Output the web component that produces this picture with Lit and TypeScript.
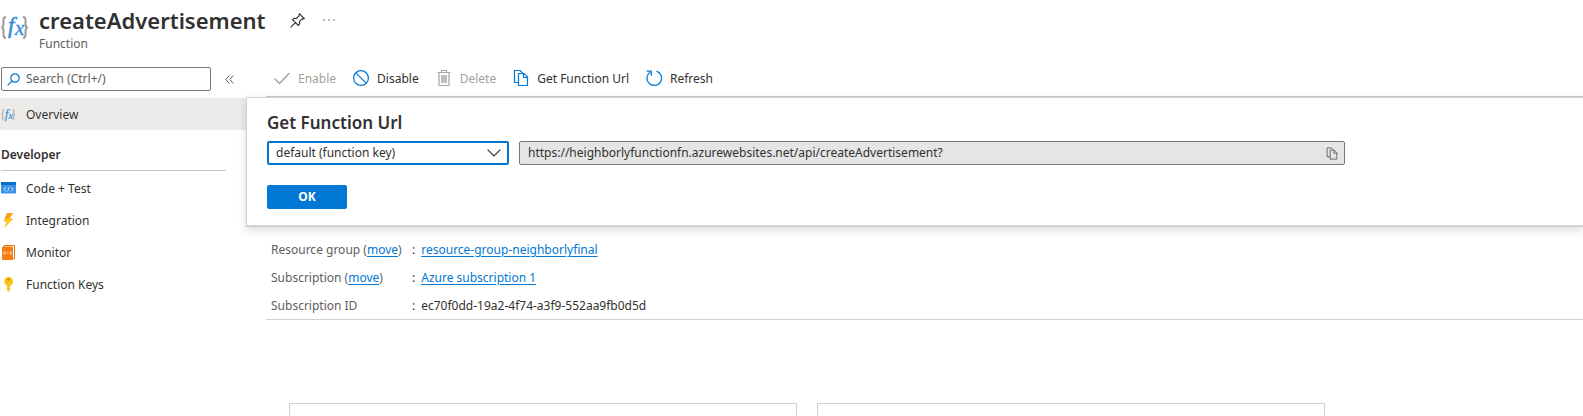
import { LitElement, html, svg, css } from "lit";
import { customElement, state } from "lit/decorators.js";

const copyPath = svg`
  <path d="M5.5 12.5h-4v-12h5.5l2.5 2.5"/>
  <path d="M5.500 3.500h5.500l3.500 3.500v8.500h-9z"/>
  <path d="M10.500 3.500v4h4"/>`;

const icons = {
  fx: svg`
    <g fill="none" stroke="#9c9c9c" stroke-width="2">
      <path d="M6 4C3.800 4 3.500 5 3.500 7v4c0 2.500-.8 3.500-2.300 3.500 1.500 0 2.300 1 2.300 3.500V22c0 2 .3 3 2.500 3"/>
      <path d="M23 4c2.200 0 2.500 1 2.500 3v4c0 2.500.8 3.500 2.300 3.500-1.500 0-2.300 1-2.300 3.500V22c0 2-.3 3-2.500 3"/>
    </g>
    <text x="8" y="20" font-family="Liberation Serif, serif" font-style="italic" font-size="23" fill="#2f8be0" stroke="#2f8be0" stroke-width="0.500">f</text>
    <text x="15" y="22" font-family="Liberation Serif, serif" font-style="italic" font-size="21" fill="#2f8be0" stroke="#2f8be0" stroke-width="0.300">x</text>`,
  check: svg`<path d="M.5 8.500l5 5L15.500 3" fill="none" stroke="#a19f9d" stroke-width="1.300"/>`,
  block: svg`<g fill="none" stroke="#0078d4" stroke-width="1.200"><circle cx="8" cy="8" r="7.400"/><path d="M2.800 2.800l10.400 10.400"/></g>`,
  trash: svg`<g fill="none" stroke="#a8a6a4" stroke-width="1.200"><path d="M1.500 2.500h13M5.500 2.500v-2h5v2M3 2.500v13h10v-13"/></g><path d="M5 5h6v8H5z" fill="#c0bebc"/>`,
  copyBlue: svg`<g fill="none" stroke="#0078d4" stroke-width="1.200">${copyPath}</g>`,
  refresh: svg`<g fill="none" stroke="#0078d4" stroke-width="1.300"><path d="M10.500 1.200A7.300 7.300 0 1 1 4 2.200"/><path d="M.8 1.200h4.500v4.500"/></g>`,
};

@customElement("app-root")
export class AppRoot extends LitElement {
  @state() private keyName = "default (function key)";

  static styles = css`
    :host {
      display: block;
      height: 100vh;
      overflow: hidden;
      box-sizing: border-box;
      background: #fff;
      color: #323130;
      font: 12px/20px "Noto Sans", "Open Sans", sans-serif;
    }
    * { box-sizing: border-box; }
    svg { display: block; flex: none; }
    button, input, select { font: inherit; color: inherit; }
    button { border: 0; padding: 0; background: none; cursor: pointer; }
    a { color: #0078d4; text-decoration: underline; text-underline-offset: 2px; }
    h1, h2, h3, ul, dl, dd { margin: 0; padding: 0; }

    .header { display: flex; gap: 9px; height: 67px; padding-top: 4px; }
    .header-icon { padding-top: 9px; }
    .title-row { display: flex; align-items: center; }
    h1 { font-size: 22px; line-height: 32px; font-weight: 600; }
    .pin { margin-left: 24px; }
    .more { margin-left: 18px; }
    .subtitle { line-height: 16px; color: #605e5c; }

    .body { display: grid; grid-template-columns: 246px minmax(0, 1fr); }
    .search-row { display: flex; align-items: center; padding-left: 1px; gap: 14px; }
    .search { display: flex; align-items: center; gap: 6px; width: 210px; height: 24px; padding-left: 5px; border: 1px solid #7a7876; border-radius: 2px; }
    .search input { flex: 1; min-width: 0; border: 0; padding: 0; outline: 0; background: none; }
    .search input::placeholder { color: #605e5c; opacity: 1; }
    .nav-item { display: flex; align-items: center; gap: 10px; height: 32px; padding: 1px 0 0 1px; line-height: 21px; color: inherit; text-decoration: none; }
    .nav-item.active { margin-top: 7px; background: #edebe9; }
    .nav ul { list-style: none; }
    h3 { margin: 15px 20px 1px 1px; padding-bottom: 5px; border-bottom: 1px solid #c8c6c4; font-size: 12px; line-height: 20px; font-weight: 600; }

    .main { position: relative; padding-left: 20px; }
    .toolbar { display: flex; height: 30px; padding: 0 0 6px 8px; gap: 17px; border-bottom: 1px solid #c8c8c8; }
    .toolbar button { display: flex; align-items: center; gap: 8px; }
    .toolbar svg { margin-bottom: 2px; }
    .toolbar button:disabled { color: #a19f9d; }

    .panel { position: absolute; top: 30px; left: 0; right: 0; height: 130px; padding: 12px 20px; background: #fff; border: 1px solid #d2d2d2; border-width: 1px 0 2px 1px; box-shadow: 0 3px 8px rgba(0, 0, 0, 0.15); }
    h2 { font-size: 17px; line-height: 26px; font-weight: 600; }
    .fields { display: grid; grid-template-columns: 242px minmax(0, 826px); gap: 10px; margin-top: 5px; }
    .select { display: grid; align-items: center; }
    .select > * { grid-area: 1 / 1; }
    .select select { appearance: none; width: 100%; height: 24px; padding: 0 30px 0 7px; border: 2px solid #0078d4; border-radius: 2px; background: #fff; outline: 0; }
    .select svg { justify-self: end; margin-right: 8px; pointer-events: none; }
    .url { display: flex; align-items: center; height: 24px; padding: 0 6px 0 8px; background: #e5e5e5; border: 1px solid #7a7876; border-radius: 2px; }
    .url input { flex: 1; min-width: 0; border: 0; padding: 0; outline: 0; background: none; }
    .ok { display: block; width: 80px; height: 24px; margin-top: 20px; border-radius: 2px; background: #0078d4; color: #fff; font-weight: 700; }

    .essentials { display: grid; grid-template-columns: 141px minmax(0, 1fr); row-gap: 8px; margin-top: 143px; padding: 0 0 3px 5px; border-bottom: 1px solid #d2d0ce; color: #323130; }
    .essentials dt { color: #605e5c; }
    .essentials dd { display: flex; gap: 6px; }
    .cards { display: grid; grid-template-columns: repeat(2, 508px); gap: 20px; margin: 83px 0 0 23px; }
    .card { height: 13px; border: 1px solid #d2d0ce; border-bottom: 0; }
  `;

  private onKeyChange(e: Event) {
    this.keyName = (e.target as HTMLSelectElement).value;
  }

  render() {
    return html`
      <header class="header">
        <svg class="header-icon" width="30" height="37" viewBox="0 0 30 28" aria-hidden="true">${icons.fx}</svg>
        <div>
          <div class="title-row">
            <h1>createAdvertisement</h1>
            <button class="pin" aria-label="Pin">
              <svg width="15" height="15" viewBox="0 0 15 15" fill="none" stroke="#323130" stroke-width="1.100"><path d="M9.500.8l4.700 4.700-1.200.6-.9-.2-2.600 2.600.1 2.500-1.300 1.400L2.600 6.700l1.400-1.300 2.500.1 2.600-2.600-.2-.9zM5.300 9.700L.6 14.400"/></svg>
            </button>
            <button class="more" aria-label="More">
              <svg width="12" height="4" viewBox="0 0 12 4" fill="#605e5c"><circle cx="1" cy="2" r=".8"/><circle cx="6" cy="2" r=".8"/><circle cx="11" cy="2" r=".8"/></svg>
            </button>
          </div>
          <div class="subtitle">Function</div>
        </div>
      </header>

      <div class="body">
        <nav class="nav">
          <div class="search-row">
            <label class="search">
              <svg width="13" height="13" viewBox="0 0 13 13" fill="none" stroke="#0078d4" stroke-width="1.200"><circle cx="8" cy="5" r="4.200"/><path d="M5 8L.6 12.400"/></svg>
              <input type="text" placeholder="Search (Ctrl+/)" aria-label="Search" />
            </label>
            <button aria-label="Collapse menu">
              <svg width="9" height="9" viewBox="0 0 9 9" fill="none" stroke="#605e5c"><path d="M4.300.5l-3.500 4 3.500 4M8.300.5l-3.500 4 3.500 4"/></svg>
            </button>
          </div>
          <a class="nav-item active" href="#overview">
            <svg width="15" height="15" viewBox="0 0 30 28" aria-hidden="true">${icons.fx}</svg>Overview
          </a>
          <h3>Developer</h3>
          <ul>
            <li><a class="nav-item" href="#code">
              <svg width="15" height="15" viewBox="0 0 15 15"><path d="M0 4h15v8.500H0z" fill="#3a93e6"/><path d="M0 1h15v3H0z" fill="#0072c9"/><path d="M5 6L3 8.200l2 2.200M10 6l2 2.200-2 2.200M8.300 5.800L6.700 10.500" fill="none" stroke="#d5eaff" stroke-width=".9"/></svg>Code + Test
            </a></li>
            <li><a class="nav-item" href="#integration">
              <svg width="15" height="15" viewBox="0 0 15 15"><path d="M6 0h6L8.500 5.500h4L3 15l2.500-6.500H2.300z" fill="#fcc419"/><path d="M6 0h6L8.500 5.500 3.800 5.700z" fill="#f7a01e"/></svg>Integration
            </a></li>
            <li><a class="nav-item" href="#monitor">
              <svg width="15" height="15" viewBox="0 0 15 15"><path d="M3 .5h10.500v13H3z" fill="#fff" stroke="#e8730c"/><rect x="1" y="1.500" width="11" height="13.500" rx="1" fill="#f57c0e"/><g fill="none" stroke="#ffe3c6"><path d="M3 6.500v3l1.800-1.500zM10.200 6.500v3L8.400 8z" stroke-width=".8"/><path d="M5.500 8h2.200" stroke-width=".8"/></g></svg>Monitor
            </a></li>
            <li><a class="nav-item" href="#keys">
              <svg width="15" height="15" viewBox="0 0 15 15"><path d="M7.500 0a4.500 4.500 0 0 1 2 8.500v.8l-1 1 1 1-1 1 .5.700-1.500 2-1.500-1.700V8.500A4.500 4.500 0 0 1 7.500 0z" fill="#fcc010"/><circle cx="7.500" cy="2.600" r="1.200" fill="#d97f00"/></svg>Function Keys
            </a></li>
          </ul>
        </nav>

        <main class="main">
          <div class="toolbar" role="toolbar">
            <button disabled><svg width="16" height="16" viewBox="0 0 16 16">${icons.check}</svg>Enable</button>
            <button><svg width="16" height="16" viewBox="0 0 16 16">${icons.block}</svg>Disable</button>
            <button disabled><svg width="16" height="16" viewBox="0 0 16 16">${icons.trash}</svg>Delete</button>
            <button><svg width="16" height="16" viewBox="0 0 16 16">${icons.copyBlue}</svg>Get Function Url</button>
            <button><svg width="16" height="16" viewBox="0 0 16 16">${icons.refresh}</svg>Refresh</button>
          </div>

          <section class="panel">
            <h2>Get Function Url</h2>
            <div class="fields">
              <div class="select">
                <select aria-label="Key" .value=${this.keyName} @change=${this.onKeyChange}>
                  <option>default (function key)</option>
                </select>
                <svg width="14" height="8" viewBox="0 0 14 8" fill="none" stroke="#323130" stroke-width="1.100"><path d="M.6.6L7 7 13.400.6"/></svg>
              </div>
              <div class="url">
                <input type="text" readonly aria-label="Function URL" value="https://heighborlyfunctionfn.azurewebsites.net/api/createAdvertisement?" />
                <button aria-label="Copy">
                  <svg width="12" height="13" viewBox="0 0 16 16" fill="none" stroke="#605e5c" stroke-width="1.200">${copyPath}</svg>
                </button>
              </div>
            </div>
            <button class="ok">OK</button>
          </section>

          <dl class="essentials">
            <dt>Resource group (<a href="#move-group">move</a>)</dt>
            <dd><span>:</span><a href="#group">resource-group-neighborlyfinal</a></dd>
            <dt>Subscription (<a href="#move-sub">move</a>)</dt>
            <dd><span>:</span><a href="#subscription">Azure subscription 1</a></dd>
            <dt>Subscription ID</dt>
            <dd><span>:</span><span>ec70f0dd-19a2-4f74-a3f9-552aa9fb0d5d</span></dd>
          </dl>

          <div class="cards">
            <div class="card"></div>
            <div class="card"></div>
          </div>
        </main>
      </div>
    `;
  }
}
